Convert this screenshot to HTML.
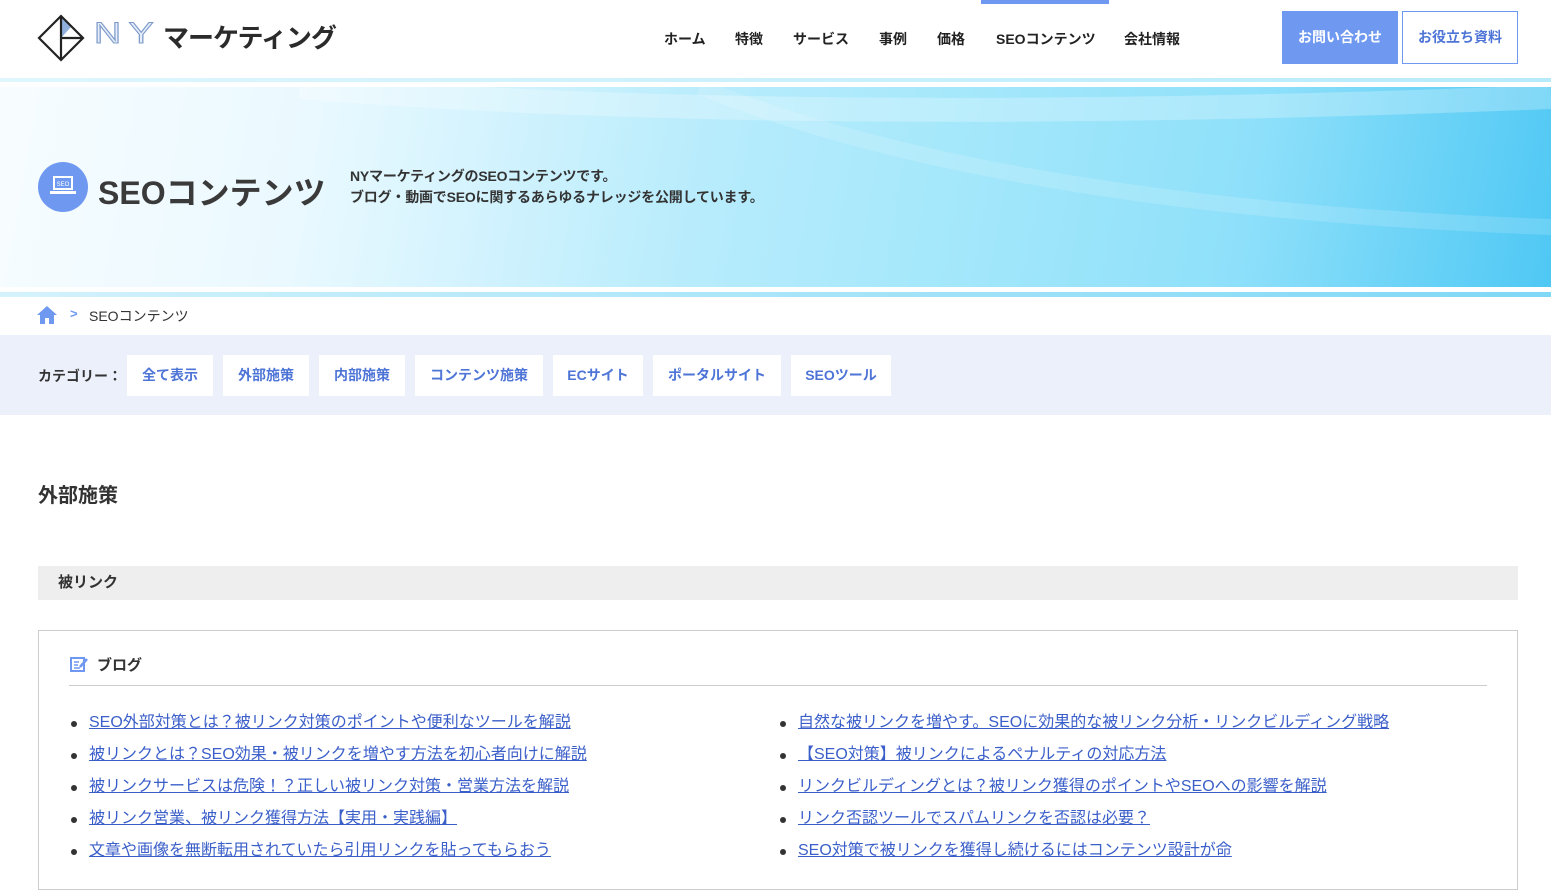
<!DOCTYPE html>
<html><head><meta charset="utf-8">
<style>
*{margin:0;padding:0;box-sizing:border-box}
body{width:1551px;height:859px;overflow:hidden;background:#fff;font-family:"Liberation Sans","Noto Sans CJK JP",sans-serif;color:#333;position:relative}
.abs{position:absolute}
nav a{position:absolute;top:29px;font-size:14px;font-weight:bold;color:#222;text-decoration:none}
.cat{position:absolute;top:355px;height:41px;background:#fff;color:#4d74d6;font-size:14px;font-weight:bold;line-height:41px;text-align:center}
ul{list-style:none}
li{position:relative;padding-left:20px;font-size:16px;height:32px;line-height:24px}
li:before{content:"";position:absolute;left:2px;top:10px;width:6px;height:6px;border-radius:50%;background:#333}
li a{color:#3b5fc9;text-decoration:underline}
</style></head><body>
<!-- header -->
<svg class="abs" style="left:37px;top:14px" width="48" height="48" viewBox="0 0 48 48">
<path d="M24 3 L34 13 L24 24 Z" fill="#8fb0dd"/>
<path d="M24 2 L46 24 L24 46 L2 24 Z M24 2 V46 M24 24 H46 M2 24 L24 2" fill="none" stroke="#222" stroke-width="2.2"/>
</svg>
<div class="abs" style="left:94px;top:17px;font-size:30px;letter-spacing:6px;transform:scaleX(1.25);transform-origin:left;-webkit-text-stroke:1px #7d9acb;color:#e6eef9">NY</div>
<div class="abs" style="left:163px;top:18px;font-size:26px;font-weight:bold;color:#2b2b2b;letter-spacing:-1px">マーケティング</div>
<nav>
<a style="left:664px">ホーム</a><a style="left:735px">特徴</a><a style="left:793px">サービス</a><a style="left:879px">事例</a><a style="left:937px">価格</a><a style="left:996px">SEOコンテンツ</a><a style="left:1124px">会社情報</a>
</nav>
<div class="abs" style="left:981px;top:0;width:128px;height:4px;background:#6f99f0"></div>
<div class="abs" style="left:1282px;top:11px;width:116px;height:53px;background:#6f99f0;color:#fff;font-size:14px;font-weight:bold;line-height:53px;text-align:center">お問い合わせ</div>
<div class="abs" style="left:1402px;top:11px;width:116px;height:53px;border:1px solid #6f99f0;color:#4d74d6;font-size:14px;font-weight:bold;line-height:51px;text-align:center">お役立ち資料</div>
<!-- hero -->
<div class="abs" style="left:0;top:78px;width:1551px;height:4px;background:linear-gradient(90deg,#dff6fd,#b6ebfb)"></div>
<div class="abs" style="left:0;top:87px;width:1551px;height:200px;background:linear-gradient(100deg,#f7fcff 0%,#eaf9ff 20%,#b8ecfc 45%,#a6e8fb 60%,#8ee0fa 80%,#4fc8f4 100%)"></div>
<svg class="abs" style="left:0;top:87px" width="1551" height="200"><path d="M300 0 Q800 40 1551 10" stroke="#fff" stroke-opacity=".25" stroke-width="24" fill="none"/><path d="M700 0 Q1000 120 1551 140" stroke="#fff" stroke-opacity=".15" stroke-width="16" fill="none"/></svg>
<div class="abs" style="left:0;top:292px;width:1551px;height:5px;background:linear-gradient(90deg,#d4f2fc,#7fd8f6)"></div>
<div class="abs" style="left:38px;top:162px;width:50px;height:50px;border-radius:50%;background:#6f99f0"></div>
<svg class="abs" style="left:49px;top:174px" width="28" height="24" viewBox="0 0 28 24"><rect x="4" y="2" width="20" height="14" fill="#fff"/><rect x="6" y="4" width="16" height="10" fill="#6f99f0"/><text x="14" y="12" font-size="6" fill="#fff" text-anchor="middle" font-family="Liberation Sans">SEO</text><rect x="1" y="17" width="26" height="3" fill="#fff"/></svg>
<div class="abs" style="left:98px;top:168px;font-size:32px;font-weight:bold;color:#3a3a3a">SEOコンテンツ</div>
<div class="abs" style="left:350px;top:166px;font-size:14px;font-weight:bold;color:#333;line-height:21px;letter-spacing:-0.2px">NYマーケティングのSEOコンテンツです。<br>ブログ・動画でSEOに関するあらゆるナレッジを公開しています。</div>
<!-- breadcrumb -->
<svg class="abs" style="left:37px;top:305px" width="20" height="19" viewBox="0 0 20 19"><path d="M10 1 L20 10 H17 V19 H12 V13 H8 V19 H3 V10 H0 Z" fill="#6f99f0"/></svg>
<div class="abs" style="left:70px;top:306px;font-size:13px;color:#6f99f0;font-weight:bold">&gt;</div>
<div class="abs" style="left:89px;top:306px;font-size:14px;color:#333">SEOコンテンツ</div>
<!-- category -->
<div class="abs" style="left:0;top:335px;width:1551px;height:80px;background:#ebf0fa"></div>
<div class="abs" style="left:38px;top:366px;font-size:14px;font-weight:bold;color:#333">カテゴリー：</div>
<div class="cat" style="left:127px;width:86px">全て表示</div>
<div class="cat" style="left:223px;width:86px">外部施策</div>
<div class="cat" style="left:319px;width:86px">内部施策</div>
<div class="cat" style="left:415px;width:128px">コンテンツ施策</div>
<div class="cat" style="left:553px;width:90px">ECサイト</div>
<div class="cat" style="left:653px;width:128px">ポータルサイト</div>
<div class="cat" style="left:791px;width:100px">SEOツール</div>
<!-- content -->
<div class="abs" style="left:38px;top:479px;font-size:20px;font-weight:bold;color:#333">外部施策</div>
<div class="abs" style="left:38px;top:566px;width:1480px;height:34px;background:#eeeeee;font-size:15px;font-weight:bold;line-height:34px;padding-left:20px">被リンク</div>
<div class="abs" style="left:38px;top:630px;width:1480px;height:260px;border:1px solid #ccc"></div>
<svg class="abs" style="left:70px;top:656px" width="18" height="16" viewBox="0 0 18 16"><rect x="1" y="2" width="13" height="13" fill="none" stroke="#6f99f0" stroke-width="2"/><path d="M4 6H9M4 9H8M4 12H10" stroke="#6f99f0" stroke-width="1.5"/><path d="M10 11 L17 3" stroke="#6f99f0" stroke-width="2.5"/></svg>
<div class="abs" style="left:97px;top:654px;font-size:15px;font-weight:bold;color:#333">ブログ</div>
<div class="abs" style="left:69px;top:685px;width:1418px;height:1px;background:#ccc"></div>
<ul class="abs" style="left:69px;top:711px">
<li><a>SEO外部対策とは？被リンク対策のポイントや便利なツールを解説</a></li>
<li><a>被リンクとは？SEO効果・被リンクを増やす方法を初心者向けに解説</a></li>
<li><a>被リンクサービスは危険！？正しい被リンク対策・営業方法を解説</a></li>
<li><a>被リンク営業、被リンク獲得方法【実用・実践編】</a></li>
<li><a>文章や画像を無断転用されていたら引用リンクを貼ってもらおう</a></li>
</ul>
<ul class="abs" style="left:778px;top:711px">
<li><a>自然な被リンクを増やす。SEOに効果的な被リンク分析・リンクビルディング戦略</a></li>
<li><a>【SEO対策】被リンクによるペナルティの対応方法</a></li>
<li><a>リンクビルディングとは？被リンク獲得のポイントやSEOへの影響を解説</a></li>
<li><a>リンク否認ツールでスパムリンクを否認は必要？</a></li>
<li><a>SEO対策で被リンクを獲得し続けるにはコンテンツ設計が命</a></li>
</ul>
</body></html>
